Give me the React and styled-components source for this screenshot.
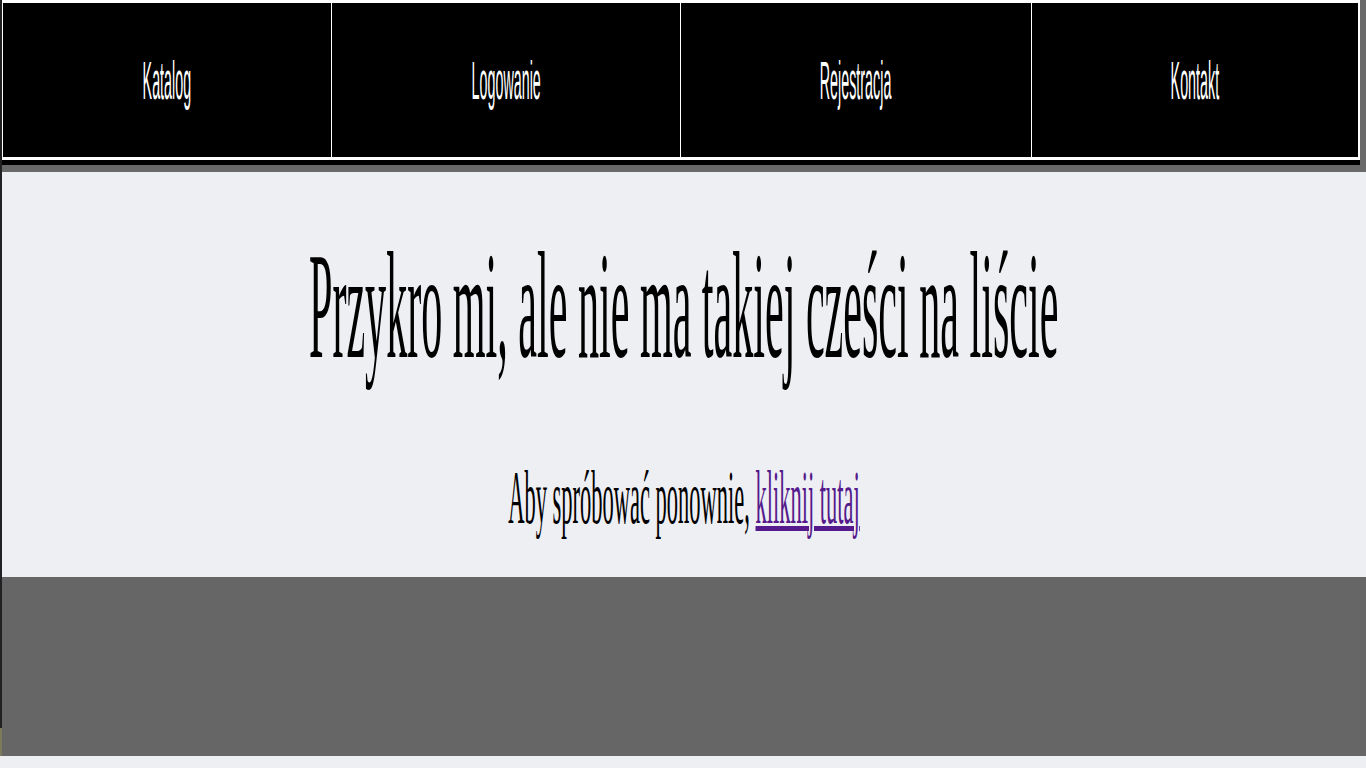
import styled, { createGlobalStyle } from 'styled-components';

const GlobalStyle = createGlobalStyle`
  html, body {
    margin: 0;
    padding: 0;
    background: #eeeff3;
  }
  body {
    overflow: hidden;
  }
`;

const links = ['Katalog', 'Logowanie', 'Rejestracja', 'Kontakt'];

const App = () => {
  return (
    <Page>
      <GlobalStyle />
      <Edge />
      <Column>
        <Header>
          <NavBand>
            <Nav>
              {links.map((label) => (
                <NavCell key={label} href="#">
                  <Squeeze $scale={0.27}>{label}</Squeeze>
                </NavCell>
              ))}
            </Nav>
          </NavBand>
        </Header>
        <Main>
          <Title>
            <Squeeze $scale={0.277}>Przykro mi, ale nie ma takiej cześci na liście</Squeeze>
          </Title>
          <Retry>
            <Squeeze $scale={0.292}>
              Aby spróbować ponownie, <RetryLink href="#">kliknij tutaj</RetryLink>
            </Squeeze>
          </Retry>
        </Main>
        <Footer />
      </Column>
    </Page>
  );
};

const Page = styled.div`
  display: flex;
  min-height: 100vh;
  background: #eeeff3;
`;

const Edge = styled.div`
  width: 2px;
  flex-shrink: 0;
  background: linear-gradient(#1f2122 0 728px, #7b7b5c 728px 756px, #eeeff3 756px);
`;

const Column = styled.div`
  flex: 1;
  display: flex;
  flex-direction: column;
  min-width: 0;
`;

const Header = styled.header`
  background: #696969;
  padding: 0 6px 7px 0;
`;

const NavBand = styled.div`
  background: #000;
  padding-bottom: 5px;
`;

const Nav = styled.nav`
  display: grid;
  grid-template-columns: 328fr 348fr 350fr 326fr;
  gap: 1px;
  height: 154px;
  background: #fff;
  border-style: solid;
  border-color: #fff;
  border-width: 3px 2px 3px 1px;
`;

const NavCell = styled.a`
  display: flex;
  align-items: center;
  justify-content: center;
  overflow: hidden;
  background: #000;
  color: #fff;
  text-decoration: none;
  font-family: 'Liberation Sans', Arial, sans-serif;
  font-size: 53px;
  line-height: 61px;
`;

const Squeeze = styled.span`
  display: inline-block;
  white-space: nowrap;
  flex-shrink: 0;
  transform: scaleX(${(p) => p.$scale});
  transform-origin: center;
`;

const Main = styled.main`
  height: 405px;
  box-sizing: border-box;
  padding: 47px 0 36px;
  overflow: hidden;
  font-family: 'Liberation Serif', 'Times New Roman', serif;
  color: #000;
`;

const Title = styled.h1`
  display: flex;
  justify-content: center;
  margin: 0;
  font-size: 152px;
  font-weight: normal;
  line-height: 175px;
`;

const Retry = styled.p`
  display: flex;
  justify-content: center;
  margin: 59px 0 0;
  font-size: 77px;
  line-height: 88px;
`;

const RetryLink = styled.a`
  color: #551a8b;
  text-decoration: underline;
  text-decoration-thickness: 5px;
`;

const Footer = styled.footer`
  height: 179px;
  background: #666;
`;

export default App;
